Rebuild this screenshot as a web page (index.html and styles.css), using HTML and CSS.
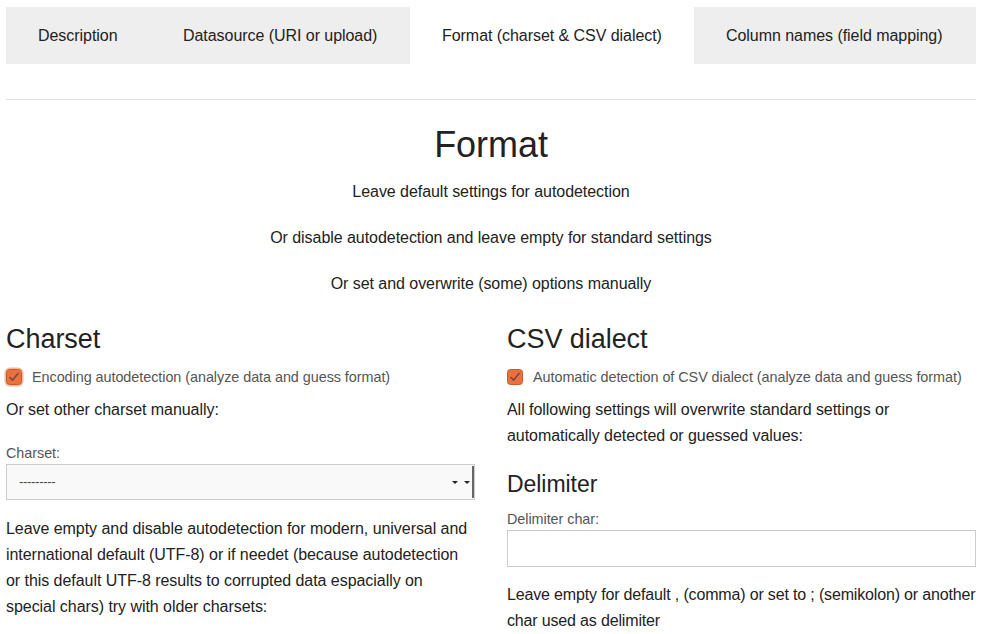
FILE: index.html
```html
<!DOCTYPE html>
<html>
<head>
<meta charset="utf-8">
<link rel="stylesheet" href="styles.css">
</head>
<body>
<div class="page">
  <nav class="tabs">
    <div class="tab">Description</div>
    <div class="tab">Datasource (URI or upload)</div>
    <div class="tab active">Format (charset &amp; CSV dialect)</div>
    <div class="tab">Column names (field mapping)</div>
  </nav>
  <hr class="rule">
  <section class="intro">
    <h1 class="title">Format</h1>
    <p>Leave default settings for autodetection</p>
    <p>Or disable autodetection and leave empty for standard settings</p>
    <p>Or set and overwrite (some) options manually</p>
  </section>
  <div class="columns">
    <div class="col">
      <h2 class="sec">Charset</h2>
      <label class="check">
        <span class="box focus"><svg width="16" height="16" viewBox="0 0 16 16"><rect x="0.5" y="0.5" width="15" height="15" rx="3" fill="#e9713f" stroke="#c9592b"/><path d="M3.5 8 L6.5 11 L12.5 4" fill="none" stroke="#7a4a36" stroke-width="1.6"/></svg></span>
        Encoding autodetection (analyze data and guess format)
      </label>
      <p class="text">Or set other charset manually:</p>
      <div class="field-label">Charset:</div>
      <div class="select-wrap">
        <div class="select">---------</div>
        <span class="arrows"><span class="tri"></span><span class="tri"></span></span>
      </div>
      <p class="text after-select">Leave empty and disable autodetection for modern, universal and international default (UTF-8) or if needet (because autodetection or this default UTF-8 results to corrupted data espacially on special chars) try with older charsets:</p>
    </div>
    <div class="col">
      <h2 class="sec">CSV dialect</h2>
      <label class="check">
        <span class="box"><svg width="16" height="16" viewBox="0 0 16 16"><rect x="0.5" y="0.5" width="15" height="15" rx="3" fill="#e9713f" stroke="#c9592b"/><path d="M3.5 8 L6.5 11 L12.5 4" fill="none" stroke="#7a4a36" stroke-width="1.6"/></svg></span>
        Automatic detection of CSV dialect (analyze data and guess format)
      </label>
      <p class="text">All following settings will overwrite standard settings or automatically detected or guessed values:</p>
      <h3 class="sub">Delimiter</h3>
      <div class="field-label small-gap">Delimiter char:</div>
      <div class="input"></div>
      <p class="text after-input">Leave empty for default , (comma) or set to ; (semikolon) or another char used as delimiter</p>
    </div>
  </div>
</div>
</body>
</html>
```
FILE: styles.css
```css
* { box-sizing: border-box; }
body {
  margin: 0;
  font-family: "Liberation Sans", Arial, sans-serif;
  color: #222;
  background: #fff;
  letter-spacing: -0.05px;
}
.page {
  width: 970px;
  margin-left: 6px;
  padding-top: 7px;
}
.tabs {
  display: flex;
}
.tab {
  min-width: 0;
  height: 57px;
  line-height: 57px;
  padding: 0 32px;
  background: #eee;
  font-size: 16px;
  color: #222;
  white-space: nowrap;
  overflow: hidden;
}
.tab:first-child { flex: 0 0 145px; }
.tab:nth-child(2) { flex: 0 0 259px; }
.tab:nth-child(3) { flex: 0 0 284px; }
.tab:nth-child(4) { flex: 1 1 0; }
.tab.active { background: #fff; }
.rule {
  margin: 35px 0 0;
  border: 0;
  border-top: 1px solid #ddd;
  height: 0;
}
.intro { text-align: center; }
.title {
  margin: 25px 0 14px;
  font-size: 36px;
  line-height: 40px;
  font-weight: normal;
}
.intro p {
  margin: 0 0 20px;
  font-size: 16px;
  line-height: 26px;
}
.intro p:last-child { margin-bottom: 0; }
.columns {
  display: grid;
  grid-template-columns: 469px 469px;
  column-gap: 32px;
  margin-top: 27px;
}
.sec {
  margin: 0;
  font-size: 27px;
  line-height: 30px;
  font-weight: normal;
}
.check {
  display: flex;
  align-items: center;
  height: 20px;
  margin-top: 13px;
  font-size: 14.4px;
  color: #555;
}
.box {
  display: inline-flex;
  width: 16px;
  height: 16px;
  margin-right: 10px;
  border-radius: 4px;
}
.box.focus { box-shadow: 0 0 0 1.5px #f6b89c; }
.text {
  margin: 10px 0 0;
  font-size: 16px;
  line-height: 26px;
}
.field-label {
  margin-top: 20px;
  font-size: 14.4px;
  line-height: 20px;
  color: #555;
}
.field-label.small-gap { margin-top: 12px; }
.select-wrap {
  position: relative;
  margin-top: 1px;
}
.select {
  height: 36px;
  line-height: 34px;
  border: 1px solid #ccc;
  background: #f9f9f9;
  padding-left: 12px;
  font-size: 13px;
  color: #444;
  letter-spacing: -0.3px;
}
.arrows {
  position: absolute;
  right: 1px;
  top: 2px;
  height: 32px;
  display: flex;
  align-items: center;
  gap: 6px;
  padding-right: 2px;
  border-right: 2px solid #666;
}
.tri {
  width: 0;
  height: 0;
  border-left: 3px solid transparent;
  border-right: 3px solid transparent;
  border-top: 3px solid #222;
}
.after-select { margin-top: 16px; }
.sub {
  margin: 22px 0 0;
  font-size: 23px;
  line-height: 26px;
  font-weight: normal;
}
.input {
  height: 37px;
  margin-top: 1px;
  border: 1px solid #ccc;
  background: #fff;
}
.after-input {
  margin-top: 15px;
  letter-spacing: -0.16px;
}
```
